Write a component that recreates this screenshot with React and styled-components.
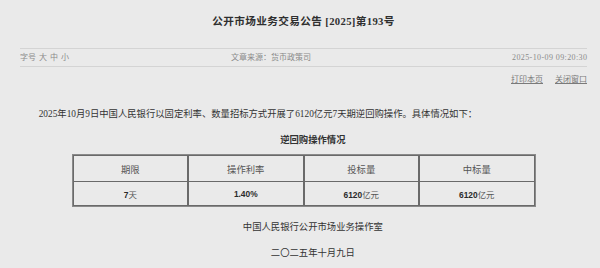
import React from 'react'
import styled, { createGlobalStyle } from 'styled-components'

const GlobalStyle = createGlobalStyle`
  html, body {
    margin: 0;
    padding: 0;
    background: #eaeaea;
  }
  body {
    font-family: "Liberation Serif", "Noto Sans CJK SC", serif;
    color: #333;
  }
`

const Page = styled.div`
  width: 600px;
  height: 268px;
  overflow: hidden;
  box-sizing: border-box;
  padding: 0 13px 0 20px;
`

const Title = styled.h1`
  margin: 0;
  padding-top: 13px;
  font-size: 10.67px;
  line-height: 16px;
  font-weight: bold;
  letter-spacing: 0.35px;
  text-align: center;
  color: #2f2f2f;
`

const Meta = styled.div`
  margin-top: 19px;
  display: grid;
  grid-template-columns: 170px 1fr 235px;
  border-top: 1px solid #d4d4d4;
  border-bottom: 1px solid #d4d4d4;
  font-size: 8px;
  line-height: 17px;
  color: #8a8a8a;
`

const MetaCell = styled.div`
  text-align: ${p => p.align || 'left'};
  white-space: nowrap;
`

const SizeOpt = styled.span`
  margin-left: 3px;
  color: #8a8a8a;
`

const Stamp = styled.span`
  letter-spacing: 0.4px;
  margin-right: -0.4px;
`

const Tools = styled.div`
  margin-top: 6px;
  display: flex;
  justify-content: flex-end;
  gap: 12px;
  font-size: 8px;
  line-height: 14px;
`

const ToolLink = styled.a`
  color: #7a7a7a;
  text-decoration: underline;
  cursor: pointer;
`

const Para = styled.p`
  margin: ${p => p.top || 0}px 0 0;
  font-size: 9.33px;
  line-height: 16px;
  text-indent: 2em;
  text-align: ${p => (p.center ? 'center' : 'left')};
  font-weight: ${p => (p.bold ? 'bold' : 'normal')};
  color: #333;
`

const Table = styled.table`
  margin: 6px auto 0;
  width: 464px;
  border: 1px solid #8a8a8a;
  border-spacing: 0;
  table-layout: fixed;
`

const Th = styled.td`
  height: 25px;
  padding: 0;
  border: 1px solid #6a6a6a;
  text-align: center;
  font-size: 9.33px;
  color: #555;
`

const Td = styled.td`
  height: 23px;
  padding: 0;
  border: 1px solid #6a6a6a;
  border-top: none;
  text-align: center;
  font-family: "Liberation Sans", "Noto Sans CJK SC", sans-serif;
  font-size: 8.4px;
  font-weight: bold;
  color: #2a2a2a;
`

const Unit = styled.span`
  font-weight: normal;
  color: #555;
`

const heads = ['期限', '操作利率', '投标量', '中标量']
const values = [['7', '天'], ['1.40%', ''], ['6120', '亿元'], ['6120', '亿元']]

export default function App() {
  return (
    <>
      <GlobalStyle />
      <Page>
        <Title>公开市场业务交易公告 [2025]第193号</Title>
        <Meta>
          <MetaCell>
            字号<SizeOpt>大</SizeOpt><SizeOpt>中</SizeOpt><SizeOpt>小</SizeOpt>
          </MetaCell>
          <MetaCell align="center">文章来源：货币政策司</MetaCell>
          <MetaCell align="right"><Stamp>2025-10-09 09:20:30</Stamp></MetaCell>
        </Meta>
        <Tools>
          <ToolLink>打印本页</ToolLink>
          <ToolLink>关闭窗口</ToolLink>
        </Tools>
        <Para top={19}>
          2025年10月9日中国人民银行以固定利率、数量招标方式开展了6120亿元7天期逆回购操作。具体情况如下：
        </Para>
        <Para top={10} center bold>逆回购操作情况</Para>
        <Table>
          <tbody>
            <tr>
              {heads.map(h => <Th key={h}>{h}</Th>)}
            </tr>
            <tr>
              {values.map(([n, u], i) => (
                <Td key={i}>{n}<Unit>{u}</Unit></Td>
              ))}
            </tr>
          </tbody>
        </Table>
        <Para top={12} center>中国人民银行公开市场业务操作室</Para>
        <Para top={10} center>二〇二五年十月九日</Para>
      </Page>
    </>
  )
}
